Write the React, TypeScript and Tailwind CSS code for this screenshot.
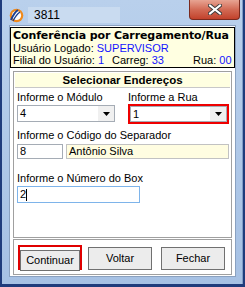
import React from "react";

const Arrow = () => (
  <div className="w-[16px] h-full bg-[#f0f0f0] flex items-center justify-center">
    <svg width="7" height="4" viewBox="0 0 7 4">
      <path d="M0 0h7L3.5 4z" fill="#000" />
    </svg>
  </div>
);

const AppIcon = () => (
  <svg width="15" height="15" viewBox="0 0 15 15">
    <circle cx="7.5" cy="7.5" r="6.8" fill="#f08a1c" />
    <circle cx="7.5" cy="7.5" r="4.6" fill="#fff" />
    <path d="M2 12 C4 7 6 4 9 2" stroke="#1d3f8f" strokeWidth="2" fill="none" />
    <path d="M4 13 C6 9 8 6 11 4" stroke="#1d3f8f" strokeWidth="1.3" fill="none" />
  </svg>
);

const Button: React.FC<{ label: string; active?: boolean }> = ({ label, active }) =>
  active ? (
    <div className="w-[64px] h-[25px] border-2 border-[#e00000]">
      <button className="w-full h-full border border-[#707070] bg-[#ececec] text-[11px] text-black leading-none">
        {label}
      </button>
    </div>
  ) : (
    <button className="w-[64px] h-[23px] border border-[#707070] bg-[#ececec] text-[11px] text-black leading-none">
      {label}
    </button>
  );

export default function App() {
  return (
    <div
      className="w-[245px] h-[287px] bg-[#1f3c7c] pl-[2px] pr-[2px] pb-[3px]"
      style={{ fontFamily: '"Liberation Sans", Arial, sans-serif' }}
    >
      <div className="h-full flex flex-col bg-gradient-to-b from-[#b9d0ec] to-[#a6c1e4] border-r border-[#7f9cc6]">
        <div className="h-[25px] flex items-start pl-[7px] shrink-0">
          <div className="mt-[8px]">
            <AppIcon />
          </div>
          <div className="mt-[7px] ml-[4px] h-[16px] w-[92px] bg-[#c9dbf0] pl-[6px] text-[12px] leading-[16px] text-black">
            3811
          </div>
          <div className="ml-auto mr-[2px] w-[51px] h-[20px] rounded-b-[4px] border border-[#7a2a1e] border-t-0 bg-gradient-to-b from-[#e7a493] via-[#d26a55] to-[#c2412b] flex items-center justify-center">
            <svg width="14" height="11" viewBox="0 0 14 11">
              <path d="M2 1.5 L12 9.5 M12 1.5 L2 9.5" stroke="#3d3d3d" strokeWidth="4" strokeLinecap="square" />
              <path d="M2 1.5 L12 9.5 M12 1.5 L2 9.5" stroke="#fff" strokeWidth="2" strokeLinecap="square" />
            </svg>
          </div>
        </div>
        <div className="flex-1 ml-[7px] mr-[6px] mb-[7px] border border-[#8aa1c0] bg-white flex flex-col">
          <div className="mt-[1px] border border-black bg-[#ffffe1] h-[41px] px-[2px] pt-[1px] text-[11px] leading-[12px] text-black">
            <div
              className="text-[11px] font-bold leading-[13px] tracking-[-0.1px]"
              style={{ fontFamily: '"DejaVu Sans", Verdana, sans-serif' }}
            >
              Conferência por Carregamento/Rua
            </div>
            <div>
              Usuário Logado: <span className="text-[#1414ff]">SUPERVISOR</span>
            </div>
            <div className="flex">
              <span className="w-[99px]">
                Filial do Usuário: <span className="text-[#1414ff]">1</span>
              </span>
              <span className="w-[81px]">
                Carreg: <span className="text-[#1414ff]">33</span>
              </span>
              <span>
                Rua: <span className="text-[#1414ff]">00</span>
              </span>
            </div>
          </div>
          <div className="mt-[3px] mx-[3px] h-[167px] border border-[#a0a0a0] flex flex-col text-[11px] text-black">
            <div className="mx-[1px] mt-[1px] h-[15px] bg-[#ffffe1] border-b border-[#c8c8c8] text-center font-bold text-[11.5px] leading-[15px]">
              Selecionar Endereços
            </div>
            <div className="flex pl-[3px] mt-[3px]">
              <div className="w-[111px]">
                <div className="leading-[13px]">Informe o Módulo</div>
                <div className="mt-[1px] w-[98px] h-[17px] border border-[#a5acb5] flex items-stretch">
                  <span className="flex-1 pl-[2px] leading-[15px]">4</span>
                  <Arrow />
                </div>
              </div>
              <div>
                <div className="leading-[13px]">Informe a Rua</div>
                <div className="border-2 border-[#ee0000] w-[101px] h-[20px]">
                  <div className="h-full border border-[#a5acb5] flex items-stretch">
                    <span className="flex-1 pl-[2px] leading-[14px]">1</span>
                    <Arrow />
                  </div>
                </div>
              </div>
            </div>
            <div className="pl-[3px] mt-[5px] leading-[13px]">Informe o Código do Separador</div>
            <div className="flex pl-[3px] mt-[2px] gap-[3px]">
              <div className="w-[46px] h-[15px] border border-[#a5acb5] pl-[2px] leading-[13px]">8</div>
              <div className="w-[163px] h-[15px] border border-[#c2c2c2] bg-[#fffde1] pl-[2px] leading-[13px]">Antônio Silva</div>
            </div>
            <div className="pl-[3px] mt-[13px] leading-[13px]">Informe o Número do Box</div>
            <div className="pl-[3px] mt-[1px]">
              <div className="w-[123px] h-[17px] border border-[#7eb4ea] pl-[2px] leading-[15px] flex items-center">
                2<span className="inline-block w-px h-[12px] bg-black" />
              </div>
            </div>
          </div>
          <div className="mt-[1px] mx-[3px] h-[36px] border border-[#a0a0a0] flex items-center pl-[4px]">
            <Button label="Continuar" active />
            <div className="ml-[6px]">
              <Button label="Voltar" />
            </div>
            <div className="ml-[9px]">
              <Button label="Fechar" />
            </div>
          </div>
        </div>
      </div>
    </div>
  );
}
